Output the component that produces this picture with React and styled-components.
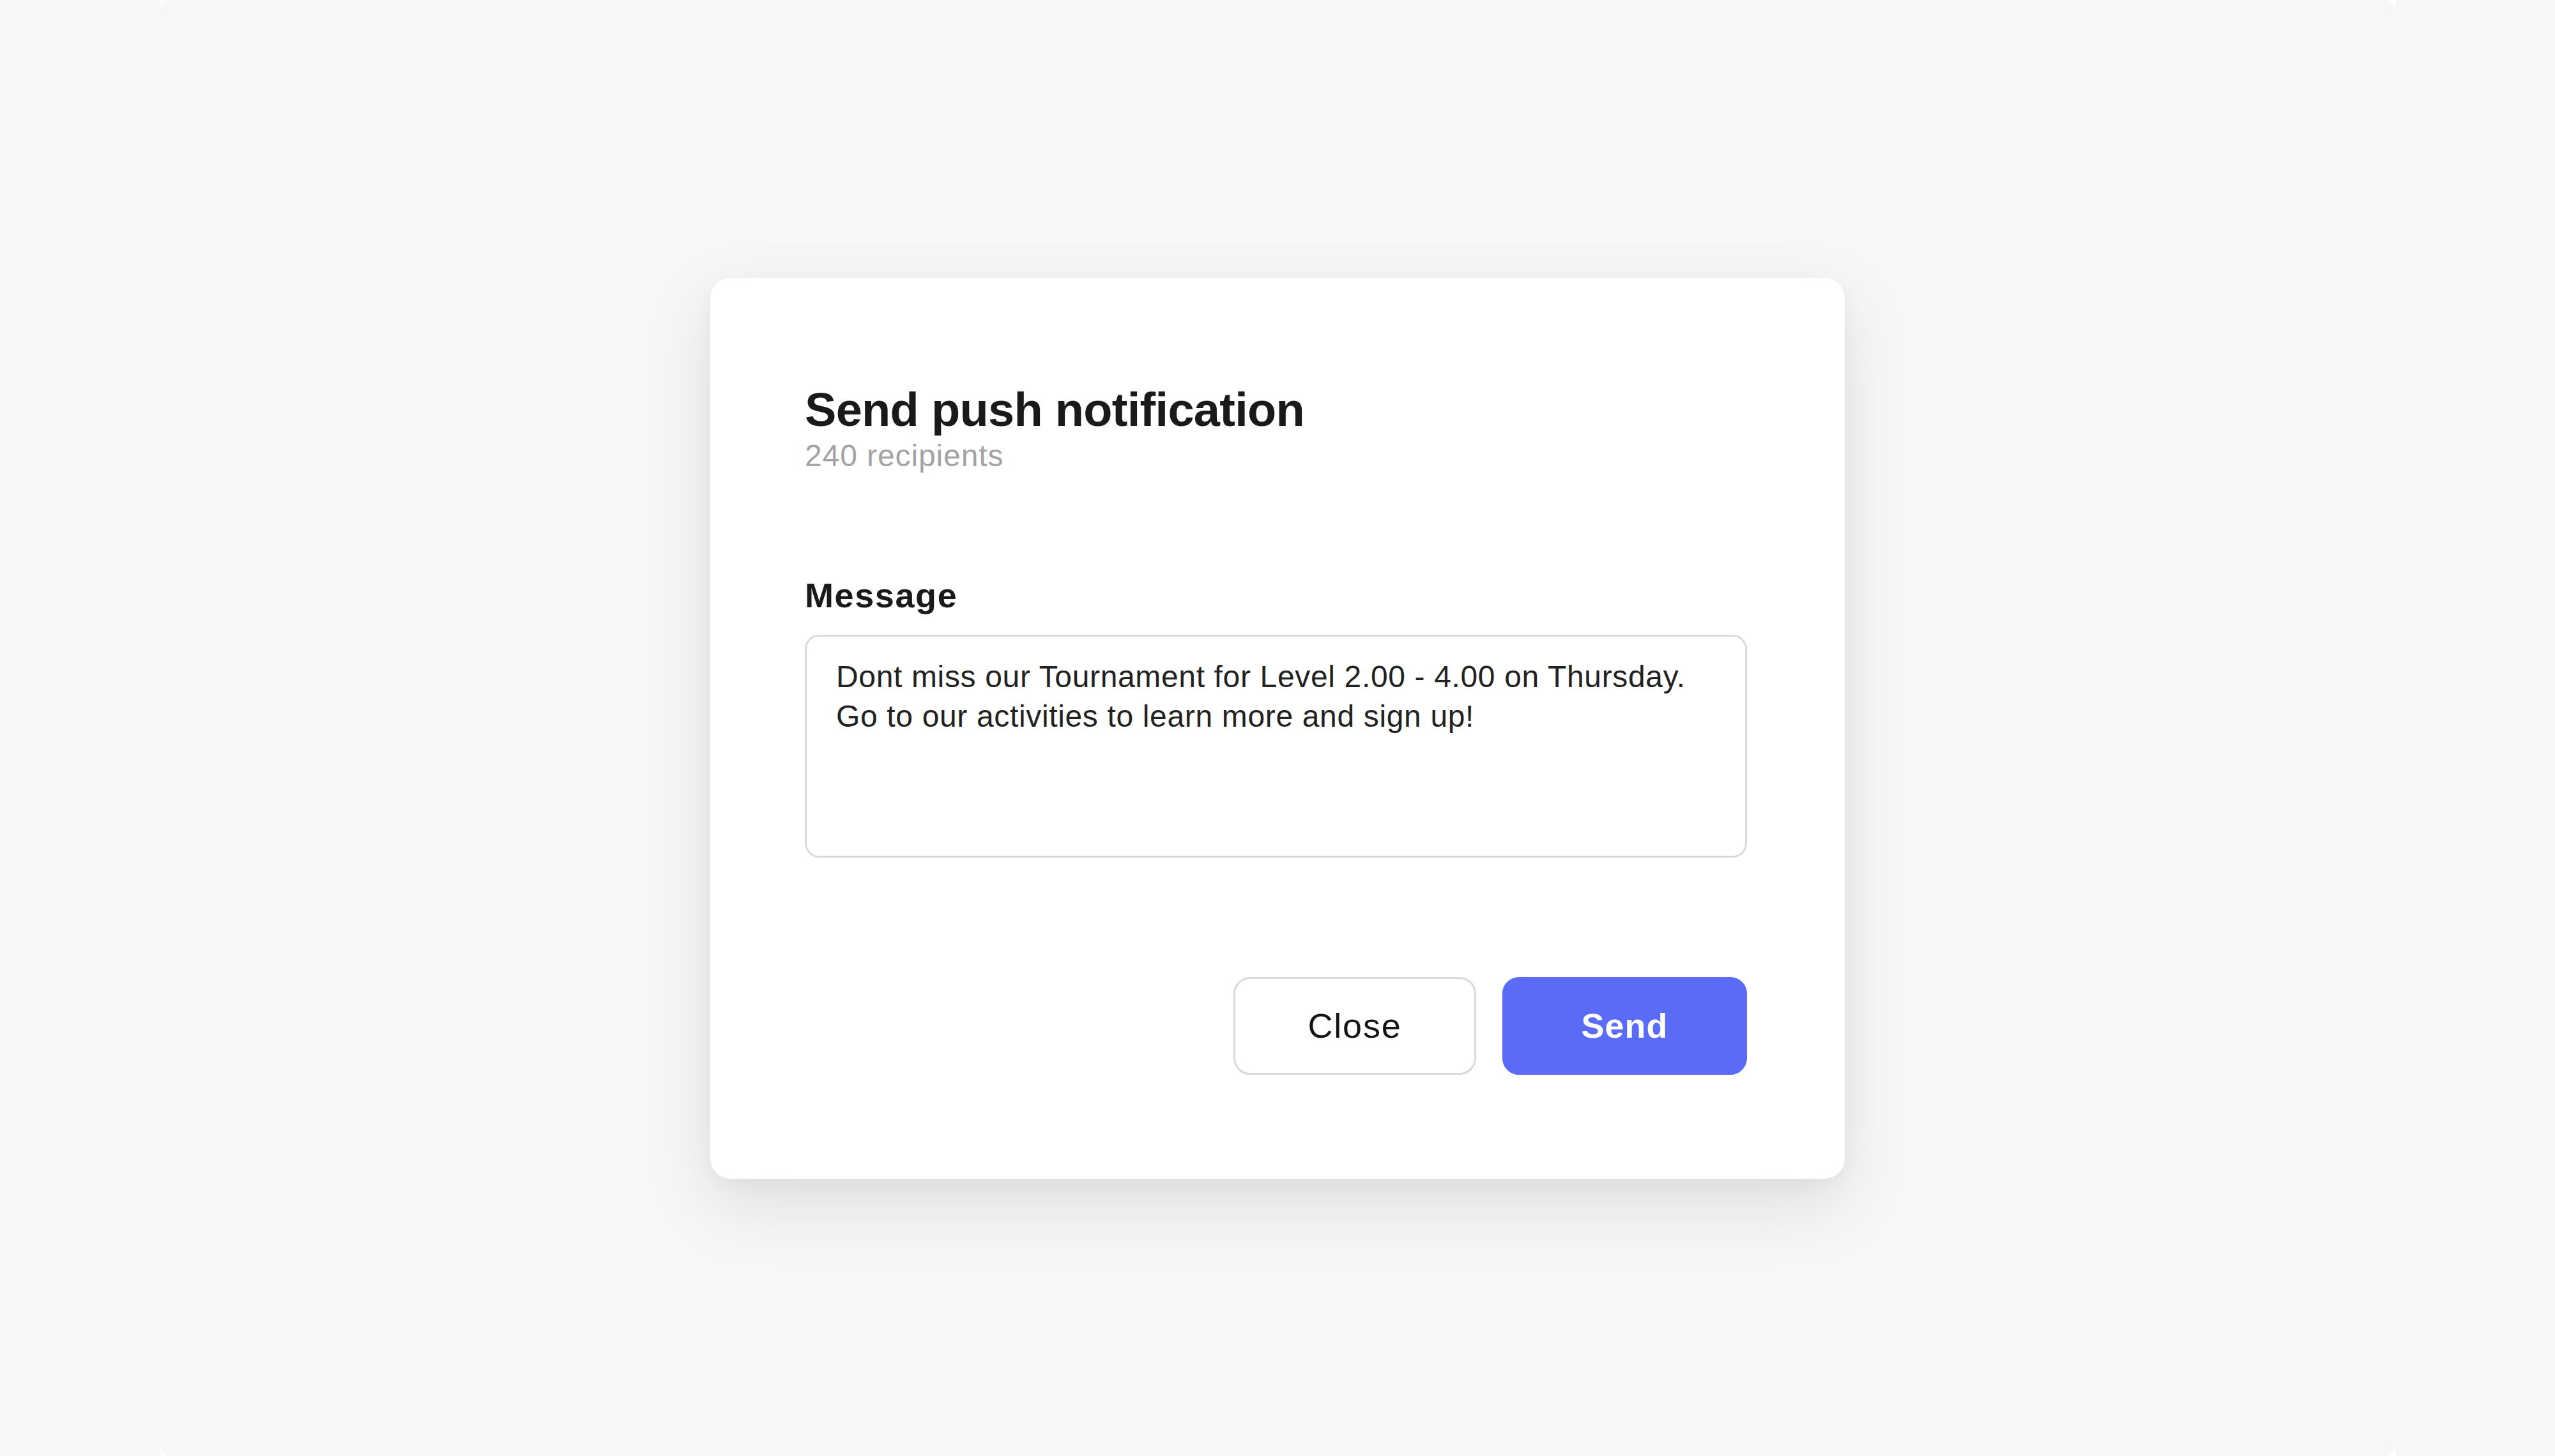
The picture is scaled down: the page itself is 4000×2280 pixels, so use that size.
import React from 'react';
import styled, { createGlobalStyle } from 'styled-components';

/* page level styles */
const GlobalStyle = createGlobalStyle`
  * {
    box-sizing: border-box;
  }
  body {
    margin: 0;
    background: #f7f7f7;
    font-family: "Liberation Sans", Arial, sans-serif;
  }
`;

const Frame = styled.div`
  width: 3500px;
  height: 2280px;
  margin: 0 auto;
  background: #ffffff;
`;

const Backdrop = styled.div`
  display: flex;
  align-items: center;
  justify-content: center;
  height: 100%;
  background: #f7f7f7;
  border-radius: 18px;
`;

const Modal = styled.div`
  display: flex;
  flex-direction: column;
  width: 1776px;
  padding: 163px 153px 163px 148px;
  background: #ffffff;
  border-radius: 32px;
  box-shadow: 0 40px 110px rgba(0, 0, 0, 0.1), 0 8px 30px rgba(0, 0, 0, 0.04);
`;

const Title = styled.h1`
  margin: 0;
  font-size: 74px;
  line-height: 88px;
  font-weight: 700;
  letter-spacing: -0.7px;
  color: #1a1a1a;
`;

const Subtitle = styled.p`
  margin: 0;
  font-size: 48px;
  line-height: 56px;
  color: #a3a3a3;
  letter-spacing: 0.9px;
`;

const Field = styled.label`
  display: flex;
  flex-direction: column;
  gap: 30px;
  margin-top: 158px;
`;

const Label = styled.span`
  font-size: 54px;
  line-height: 64px;
  font-weight: 700;
  letter-spacing: 1.6px;
  color: #1a1a1a;
`;

const TextArea = styled.textarea`
  width: 100%;
  height: 349px;
  padding: 32px 46px;
  border: 3px solid #d9d9d9;
  border-radius: 22px;
  font-family: "Liberation Sans", Arial, sans-serif;
  font-size: 48px;
  line-height: 62px;
  letter-spacing: 0.65px;
  color: #222222;
  background: #ffffff;
  resize: none;
  outline: none;
`;

const Actions = styled.div`
  display: flex;
  justify-content: flex-end;
  gap: 41px;
  margin-top: 187px;
`;

const Button = styled.button`
  width: ${(p) => (p.$primary ? '383px' : '380px')};
  height: 153px;
  border-radius: 26px;
  border: 3px solid ${(p) => (p.$primary ? '#5a6bf7' : '#d9d9d9')};
  background: ${(p) => (p.$primary ? '#5a6bf7' : '#ffffff')};
  color: ${(p) => (p.$primary ? '#ffffff' : '#141414')};
  font-family: "Liberation Sans", Arial, sans-serif;
  font-size: 54px;
  font-weight: ${(p) => (p.$primary ? 700 : 400)};
  letter-spacing: ${(p) => (p.$primary ? '1px' : '1.8px')};
  cursor: pointer;
`;

const message =
  'Dont miss our Tournament for Level 2.00 - 4.00 on Thursday.\nGo to our activities to learn more and sign up!';

const App = () => {
  return (
    <>
      <GlobalStyle />
      <Frame>
        <Backdrop>
          <Modal>
            <Title>Send push notification</Title>
            <Subtitle>240 recipients</Subtitle>
            <Field>
              <Label>Message</Label>
              <TextArea defaultValue={message} />
            </Field>
            <Actions>
              <Button type="button">Close</Button>
              <Button type="button" $primary>
                Send
              </Button>
            </Actions>
          </Modal>
        </Backdrop>
      </Frame>
    </>
  );
};

export default App;
